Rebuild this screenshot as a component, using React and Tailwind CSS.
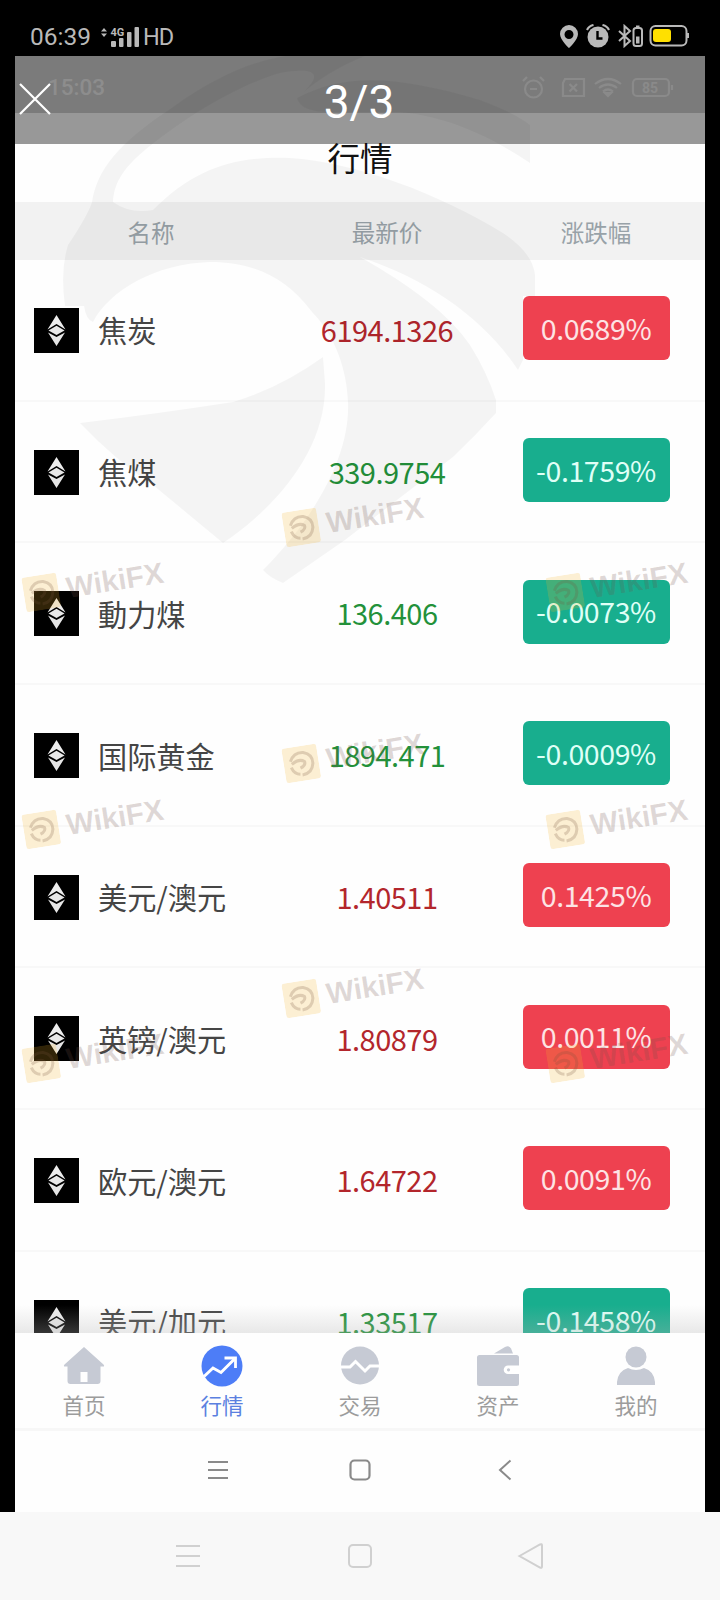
import clsx from 'clsx';

const quotes = [
  { name: '焦炭', price: '6194.1326', change: '0.0689%', up: true },
  { name: '焦煤', price: '339.9754', change: '-0.1759%', up: false },
  { name: '動力煤', price: '136.406', change: '-0.0073%', up: false },
  { name: '国际黄金', price: '1894.471', change: '-0.0009%', up: false },
  { name: '美元/澳元', price: '1.40511', change: '0.1425%', up: true },
  { name: '英镑/澳元', price: '1.80879', change: '0.0011%', up: true },
  { name: '欧元/澳元', price: '1.64722', change: '0.0091%', up: true },
  { name: '美元/加元', price: '1.33517', change: '-0.1458%', up: false },
];

const watermarks = [
  { left: 268, top: 436 },
  { left: 8, top: 501 },
  { left: 532, top: 501 },
  { left: 268, top: 672 },
  { left: 8, top: 738 },
  { left: 532, top: 738 },
  { left: 268, top: 907 },
  { left: 8, top: 972 },
  { left: 532, top: 972 },
];

const HomeIcon = () => (
  <svg className="w-[42px] h-[42px]" viewBox="0 0 42 42" fill="#c6cad4">
    <path
      fillRule="evenodd"
      d="M21 2 1.500 19.500q-1.500 2 .5 2H4.500V36q0 3 3 3h27q3 0 3-3V21.500h2.500q2 0 .5-2zM17.500 27h7v10h-7z"
    />
  </svg>
);

const MarketIcon = () => (
  <svg className="w-[42px] h-[42px]" viewBox="0 0 42 42" fill="none">
    <circle cx="21" cy="21" r="20.500" fill="#4d7df7" />
    <path d="M3 31.500 12 23l8 4.500L33.500 14" stroke="#fff" strokeWidth="3" />
    <path d="M23.500 13h11v10" stroke="#fff" strokeWidth="2.800" />
  </svg>
);

const TradeIcon = () => (
  <svg className="w-[42px] h-[42px]" viewBox="0 0 42 42" fill="none">
    <circle cx="21" cy="20.500" r="19" fill="#c6cad4" />
    <path d="M1 22h10l5.500-5.500 9.500 9.500 5-5H41" stroke="#fff" strokeWidth="3" />
  </svg>
);

const WalletIcon = () => (
  <svg className="w-[44px] h-[42px]" viewBox="0 0 44 42">
    <path d="M18 8.500 29 2q4-2 6 1.500l2 5z" fill="#c6cad4" />
    <rect x="1" y="10" width="42" height="31" rx="2.500" fill="#c6cad4" />
    <path d="M44 20.500H32a4.300 4.300 0 0 0 0 8.600h12z" fill="#fff" />
    <circle cx="32.500" cy="24.800" r="1.600" fill="#c6cad4" />
  </svg>
);

const UserIcon = () => (
  <svg className="w-[42px] h-[42px]" viewBox="0 0 42 42" fill="#c6cad4">
    <circle cx="21" cy="12" r="10.500" />
    <path d="M2 40V37q1-11 11-14 8 4 16 0Q39 26 40 37v3z" />
  </svg>
);

const tabs = [
  { label: '首页', icon: HomeIcon },
  { label: '行情', icon: MarketIcon, active: true },
  { label: '交易', icon: TradeIcon },
  { label: '资产', icon: WalletIcon },
  { label: '我的', icon: UserIcon },
];

const StatusBar = () => (
  <div className="flex h-14 shrink-0 items-center justify-between pt-4 pl-[30px] pr-[30px] text-[#b9b9b9]">
    <div className="flex items-center pt-px font-['Roboto',sans-serif]">
      <span className="w-[61px] text-[24.5px] leading-6">06:39</span>
      <svg className="ml-2.5 h-[22px] w-10" viewBox="0 0 40 22" fill="#b9b9b9">
        <path d="M0 5.500 3 2l3 3.500zM0 7.500h6L3 11z" />
        <rect x="10" y="15" width="5" height="6" rx="1" />
        <rect x="18" y="12" width="4.500" height="9" rx="1" />
        <rect x="26" y="6" width="4.500" height="15" rx="1" />
        <rect x="33.500" y="1" width="4.500" height="20" rx="1" />
        <text x="9.500" y="9.500" fontSize="11" fontWeight="700">4G</text>
      </svg>
      <span className="ml-0.5 text-[23.5px] leading-6 tracking-[-1px]">HD</span>
    </div>
    <svg className="h-6 w-[130px]" viewBox="1 0 130 24" fill="none">
      <path fillRule="evenodd" fill="#b9b9b9" d="M10 1a9 9 0 0 0-9 9c0 6 9 14 9 14s9-8 9-14a9 9 0 0 0-9-9zm0 5a4.500 4.500 0 1 1 0 9 4.500 4.500 0 0 1 0-9z" />
      <circle cx="39" cy="13" r="10.500" fill="#b9b9b9" />
      <path d="M38.500 7v7.500h5" stroke="#000" strokeWidth="2.400" />
      <path d="M28 6q2-4 6.500-5M50 6q-2-4-6.500-5" stroke="#b9b9b9" strokeWidth="2.200" />
      <path d="m60 7 11 10-5.500 5V2L71 7 60 17" stroke="#b9b9b9" strokeWidth="2" />
      <rect x="74.500" y="4" width="8.500" height="18" rx="2.500" stroke="#b9b9b9" strokeWidth="2" />
      <path d="M77 2.500h3.500" stroke="#b9b9b9" strokeWidth="2" />
      <rect x="77" y="12.500" width="3.500" height="7" fill="#b9b9b9" />
      <rect x="91.500" y="2" width="36" height="19.500" rx="5" stroke="#b9b9b9" strokeWidth="2" />
      <rect x="94" y="5" width="18" height="13" rx="3" fill="#ffe000" />
      <path d="M129 9v5" stroke="#b9b9b9" strokeWidth="2" />
    </svg>
  </div>
);

const InnerStatusBar = () => (
  <div className="flex h-[57px] shrink-0 items-center justify-between bg-[#cdcdcd] pl-[33px] pr-[30px] pt-1.5">
    <span className="text-[22.5px] font-medium text-[#ececec] font-['Roboto',sans-serif]">15:03</span>
    <svg className="h-6 w-[154px]" viewBox="0 0 154 24" fill="none" stroke="#e6e6e6" strokeWidth="2.200">
      <circle cx="12.500" cy="13" r="8.500" />
      <path d="M9 13h7M2 5l4-4M23 5l-4-4" />
      <path d="M44 3h19v17H42V7z" />
      <path d="m48.500 8 7.500 7.500M56 8l-7.500 7.500" />
      <path d="M74 8q13-10 26 0M78 12q9-7 18 0M82 15.500q5-4 10 0" />
      <path d="m84 17 3 3 3-3z" fill="#e6e6e6" />
      <rect x="112" y="3" width="36" height="17" rx="4" />
      <path d="M151 9v5" />
      <text x="121" y="17" fontSize="14" fontWeight="700" fontFamily="Roboto" fill="#e6e6e6" stroke="none">85</text>
    </svg>
  </div>
);

const CoinIcon = () => (
  <svg className="h-[45px] w-[45px] shrink-0 bg-black" viewBox="0 0 45 45">
    <path d="M22.500 7 13.500 21.500l9-5.500 9 5.500z" fill="#ededed" />
    <path d="m14.500 22.500 8-4.700 8 4.700-8 4.500z" fill="#e8e8e8" />
    <path d="m14 24.500 8.500 4.500 8.500-4.500-8.500 13.500z" fill="#e6e6e6" />
  </svg>
);

const QuoteRow = ({ name, price, change, up }) => (
  <div className="flex h-[141.7px] shrink-0 items-center border-b-2 border-[#f8f8f8] text-[29.2px]">
    <div className="flex w-[272px] items-center gap-[19px] pl-[19px] pt-px text-[#454545]">
      <CoinIcon />
      <span>{name}</span>
    </div>
    <div className={clsx('w-[200px] text-center text-[29px] tracking-[-0.5px]', up ? 'text-[#b3262c]' : 'text-[#23913a]')}>
      {price}
    </div>
    <div className="flex w-[218px] justify-center">
      <span
        className={clsx(
          'flex h-16 w-[147px] items-center justify-center rounded-md text-[28.5px] tracking-[-0.4px] mb-[3px]',
          up ? 'bg-[#ee4150] text-[#fde3e4]' : 'bg-[#18ae8e] text-[#dffff6]'
        )}
      >
        {change}
      </span>
    </div>
  </div>
);

// faint eagle behind the list, same artwork as the WikiFX mark
const Eagle = () => (
  <svg className="pointer-events-none absolute left-0 top-0 h-[560px] w-[690px]" viewBox="15 56 690 560" fill="#000" fillOpacity="0.04">
    <path d="M92 202C97 170 118 143 173 107 215 77 250 62 285 56H365Q325 72 297 98C345 72 400 76 480 100Q515 113 530 125V163C495 140 455 118 400 112H330Q300 112 297 98C330 70 310 68 280 73 230 88 180 122 145 150 121 170 114 185 113 202Q130 214 153 210C195 168 235 156 290 158 355 162 440 194 503 233Q533 253 535 275V296H523V360L518 370C485 320 430 280 360 257 410 285 450 315 470 345Q487 372 496 400V413Q476 435 453 457L345 540 283 583Q270 578 263 570C310 523 350 460 348 403 347 370 335 335 312 312 285 275 250 262 210 262 155 264 110 290 93 322Q86 320 84 306H65Q60 270 68 245 88 215 92 202Z" />
    <path d="M323 357Q280 388 233 402 155 414 80 423 115 460 153 485L223 543C275 508 327 450 325 383Z" />
  </svg>
);

const Watermark = ({ left, top }) => (
  <div
    className="pointer-events-none absolute flex h-[52px] w-[150px] -rotate-[9deg] items-center gap-2 origin-center"
    style={{ left, top }}
  >
    <svg className="h-[35px] w-[35px] shrink-0" viewBox="0 0 35 35">
      <rect width="35" height="35" rx="3" fill="#f5b52a" fillOpacity="0.2" />
      <g fill="none" stroke="#78503c" strokeOpacity="0.22" strokeWidth="3">
        <path d="M7 14q5-9 14-7 9 3 8 12-2 10-12 10" />
        <path d="M7 20q2 7 8 8" />
        <path d="M8 17q8-5 13-1 1 4-5 6" />
      </g>
    </svg>
    <span className="text-[29.5px] font-bold leading-none text-[#6e5048]/22 font-['Liberation_Sans',sans-serif]">WikiFX</span>
  </div>
);

export default function App() {
  return (
    <div className="flex h-[1600px] w-[720px] flex-col overflow-hidden bg-black font-['Noto_Sans_CJK_SC',sans-serif]">
      <StatusBar />

      <div className="relative mx-[15px] flex h-[1456px] shrink-0 flex-col overflow-hidden bg-[#fefefe]">
        <InnerStatusBar />
        <div className="flex h-[89px] shrink-0 items-center justify-center text-[32.5px] text-[#111]">行情</div>
        <div className="flex h-[58px] shrink-0 items-center bg-[#f2f2f2] pt-1 text-center text-[23.5px] text-[#98a2a8]">
          <span className="w-[272px]">名称</span>
          <span className="w-[200px]">最新价</span>
          <span className="w-[218px]">涨跌幅</span>
        </div>

        <div className="relative flex h-[1073px] shrink-0 flex-col overflow-hidden">
          {quotes.map((quote) => (
            <QuoteRow key={quote.name} {...quote} />
          ))}
          <div className="absolute inset-x-0 bottom-0 h-7 bg-linear-to-b from-[#b4b4b4]/0 to-[#b4b4b4]/30" />
        </div>

        <div className="flex h-[98px] shrink-0 border-b-3 border-[#f7f7f7]">
          {tabs.map(({ label, icon: Icon, active }) => (
            <div key={label} className="flex flex-1 flex-col items-center pt-3">
              <Icon />
              <span className={clsx('mt-0.5 text-[21.5px] leading-8', active ? 'text-[#5b80e0]' : 'text-[#9c9c9c]')}>
                {label}
              </span>
            </div>
          ))}
        </div>

        <div className="flex grow items-center justify-center pb-[3px]">
          <svg className="h-6 w-[310px]" viewBox="0 0 310 24" fill="none" stroke="#8a8a8a" strokeWidth="2">
            <path d="M3 4h20M3 12h20M3 20h20" />
            <rect x="145.500" y="2.500" width="19" height="19" rx="4" strokeWidth="2.200" />
            <path d="M305.500 2.500 295 12l10.500 9.500" />
          </svg>
        </div>

        <Eagle />
        {watermarks.map((mark) => (
          <Watermark key={`${mark.left}-${mark.top}`} {...mark} />
        ))}

        {/* viewer toolbar */}
        <div className="absolute inset-x-0 top-0 flex h-[88px] items-center justify-center bg-black/40 text-white">
          <svg className="absolute left-1 top-[27px] h-8 w-8" viewBox="0 0 32 32" stroke="#fff" strokeWidth="2.200">
            <path d="M1 1l30 30M31 1 1 31" />
          </svg>
          <span className="pt-1 pr-0.5 text-[46px] leading-none font-['Roboto',sans-serif]">3/3</span>
        </div>
      </div>

      <div className="flex h-[88px] shrink-0 items-center justify-center bg-[#f8f8f8]">
        <svg className="h-7 w-[370px]" viewBox="0 0 370 28" fill="none" stroke="#d0d0d0" strokeWidth="2">
          <path d="M1 4h24M1 14h24M1 24h24" />
          <rect x="174" y="3" width="22" height="22" rx="4" />
          <path d="M344.500 14 365 2.500q2-1 2 1v21q0 2-2 1z" />
        </svg>
      </div>
    </div>
  );
}
